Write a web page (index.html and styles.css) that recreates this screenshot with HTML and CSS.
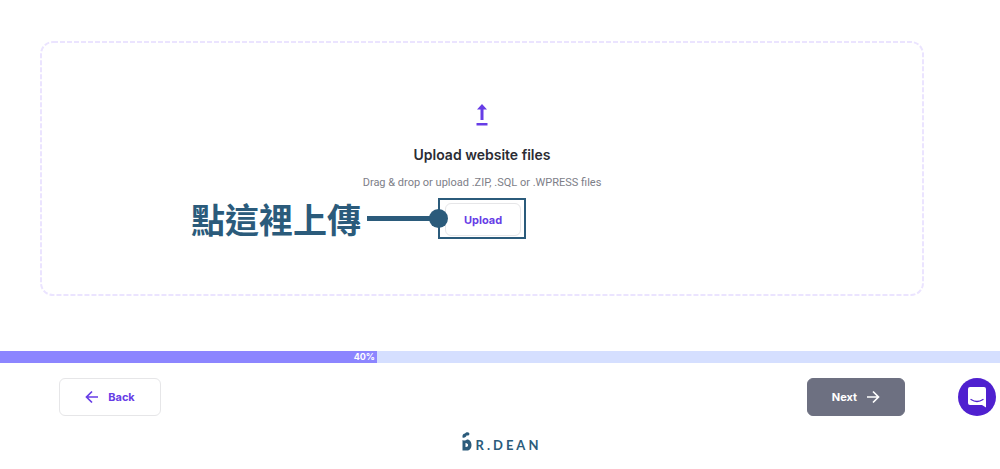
FILE: index.html
```html
<!DOCTYPE html>
<html lang="en">

<head>
    <meta charset="UTF-8">
    <meta name="viewport" content="width=device-width, initial-scale=1.0">
    <title>Upload website files</title>
    <link rel="stylesheet" href="styles.css">
</head>

<body>

    <main class="content">
        <section class="dropzone">
            <svg class="dropzone-border" aria-hidden="true">
                <rect x="1" y="1" rx="12" />
            </svg>

            <svg class="upload-icon" viewBox="0 0 14 22" aria-hidden="true">
                <path d="M7 0 12 5.5H8.5V16H5.5V5.5H2Z" />
                <path d="M1.5 19H12.5V21.5H1.5Z" />
            </svg>
            <h1 class="title">Upload website files</h1>
            <p class="hint">Drag &amp; drop or upload .ZIP, .SQL or .WPRESS files</p>

            <div class="highlight">
                <button type="button" class="button upload">Upload</button>
                <div class="callout">
                    <span class="callout-text" lang="zh-Hant">點這裡上傳</span>
                    <span class="callout-line"></span>
                    <span class="callout-dot"></span>
                </div>
            </div>
        </section>
    </main>

    <div class="progress">
        <div class="progress-fill">40%</div>
    </div>

    <nav class="actions">
        <button type="button" class="button back">
            <svg class="arrow" viewBox="0 0 14 14" aria-hidden="true">
                <path d="M13 7H2M7 1.5 1.5 7 7 12.5" />
            </svg>
            Back
        </button>
        <button type="button" class="button next">
            Next
            <svg class="arrow" viewBox="0 0 14 14" aria-hidden="true">
                <path d="M1 7H12M7 1.5 12.5 7 7 12.5" />
            </svg>
        </button>
        <button type="button" class="chat" aria-label="Open chat">
            <svg viewBox="0 0 38 38" aria-hidden="true">
                <path class="bubble" d="M12 9H26Q28 9 28 11V29.5L24 27H12Q10 27 10 25V11Q10 9 12 9Z" />
                <path class="smile" d="M13 21.5Q19 25.5 25 21.5" />
            </svg>
        </button>
    </nav>

    <footer class="brand">
        <svg class="brand-mark" viewBox="0 0 10 19" aria-hidden="true">
            <path d="M0.5 5.5C0 3 1.5 1.5 3 1.5C4 0 6.5 0 7.3 1.2C7.8 3 6.5 3.8 4.5 3.5C4.5 5 2 6.5 0.5 5.5Z" />
            <path fill-rule="evenodd" d="M0.5 8C2.5 9 4 8.5 5 7.5C8 7.5 9.5 10 9.5 13C9.5 16.5 7.5 18.5 5 18.5H0.5ZM3.5 11V15C7 15.5 7 11 3.5 11Z" />
        </svg>
        <span class="brand-name">R.DEAN</span>
    </footer>

</body>

</html>
```
FILE: styles.css
```css
* {
    box-sizing: border-box;
}

body {
    margin: 0;
    background: #fff;
    color: #2b2c33;
    font-family: Inter, "Noto Sans CJK TC", sans-serif;
}

.content {
    padding: 41px 76px 55px 40px;
}

.dropzone {
    position: relative;
    display: flex;
    flex-direction: column;
    align-items: center;
    padding: 63px 20px 57px;
}

/* svg outline, so the dashes stay short and even */
.dropzone-border {
    position: absolute;
    inset: 0;
    width: 100%;
    height: 100%;
}

.dropzone-border rect {
    width: calc(100% - 2px);
    height: calc(100% - 2px);
    fill: none;
    stroke: #ebe4ff;
    stroke-width: 2;
    stroke-dasharray: 5 2;
}

.upload-icon {
    width: 14px;
    height: 22px;
    fill: #673de6;
}

.title {
    margin: 19px 0 0;
    font-size: 14px;
    line-height: 20px;
    font-weight: 600;
}

.hint {
    margin: 8px 0 5px;
    color: #7d7e88;
    font-family: Roboto, sans-serif;
    font-size: 11px;
    line-height: 20px;
}

.button {
    display: flex;
    align-items: center;
    justify-content: center;
    gap: 9px;
    border: 1px solid #e6e6e8;
    border-radius: 6px;
    background: #fff;
    color: #673de6;
    font-family: inherit;
    font-size: 11px;
    font-weight: 700;
    cursor: pointer;
}

.highlight {
    position: relative;
    padding: 3px 3px 1px 5px;
    border: 2px solid #2b5b7b;
}

.upload {
    width: 76px;
    height: 33px;
}

/* the note sits over the drop area, its dot on the frame's left edge */
.callout {
    position: absolute;
    top: 50%;
    right: 100%;
    display: flex;
    align-items: center;
    margin-right: -8px;
    transform: translateY(-50%);
    color: #2b5b7b;
    white-space: nowrap;
}

.callout-text {
    font-family: "Noto Sans CJK TC", sans-serif;
    font-size: 34px;
    line-height: 40px;
    font-weight: 700;
}

.callout-line {
    width: 64px;
    height: 5px;
    margin-left: 6px;
    background: #2b5b7b;
}

.callout-dot {
    width: 19px;
    height: 19px;
    margin-left: -2px;
    border-radius: 50%;
    background: #2b5b7b;
}

.progress {
    height: 12px;
    background: #d5dfff;
}

.progress-fill {
    width: 37.7%;
    height: 100%;
    padding-right: 2px;
    background: #8c85ff;
    color: #fff;
    font-size: 9px;
    line-height: 12px;
    font-weight: 700;
    text-align: right;
}

.actions {
    display: flex;
    align-items: center;
    padding: 15px 4px 0 59px;
}

.back {
    width: 102px;
    height: 38px;
}

.next {
    width: 98px;
    height: 38px;
    margin-left: auto;
    border-color: #6d7081;
    background: #6d7081;
    color: #fff;
}

.arrow {
    width: 14px;
    height: 14px;
    fill: none;
    stroke: currentColor;
    stroke-width: 1.7;
}

.chat {
    width: 38px;
    height: 38px;
    margin-left: 53px;
    padding: 0;
    border: 0;
    border-radius: 50%;
    background: #4f20cf;
    cursor: pointer;
}

.chat svg {
    display: block;
}

.bubble {
    fill: #fff;
}

.smile {
    fill: none;
    stroke: #4f20cf;
    stroke-width: 1.3;
    stroke-linecap: round;
}

.brand {
    display: flex;
    align-items: flex-end;
    justify-content: center;
    gap: 4px;
    padding: 16px 0;
    color: #2b5b7b;
}

.brand-mark {
    width: 10px;
    height: 19px;
    fill: currentColor;
}

.brand-name {
    margin-right: -3px;
    font-family: Lato, sans-serif;
    font-size: 13px;
    line-height: 12px;
    font-weight: 700;
    letter-spacing: 3px;
}
```
